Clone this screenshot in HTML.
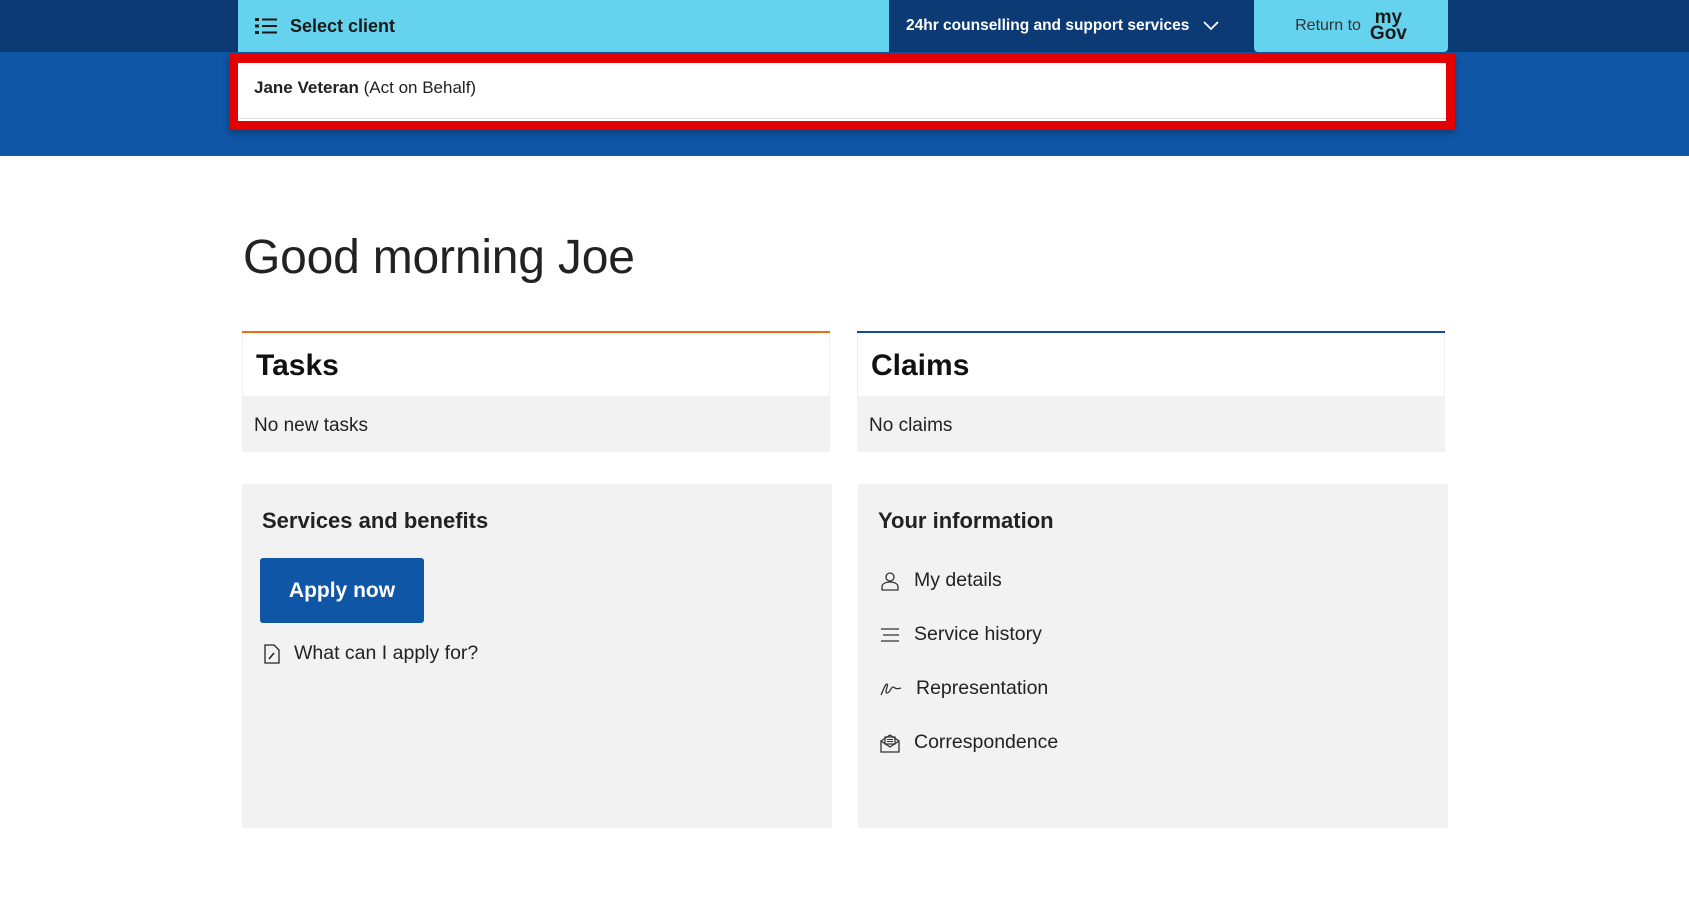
<!DOCTYPE html>
<html><head><meta charset="utf-8"><style>
*{margin:0;padding:0;box-sizing:border-box}
body{width:1689px;height:898px;background:#fff;font-family:"Liberation Sans","DejaVu Sans",sans-serif;color:#222;position:relative;overflow:hidden}
.abs{position:absolute}
.top{left:0;top:0;width:1689px;height:52px;background:#0b3a75}
.band{left:0;top:52px;width:1689px;height:104px;background:#0f56a6}
.sel{left:238px;top:0;width:651px;height:52px;background:#65d3ee;font-weight:bold;font-size:18px;color:#1a1a1a;display:flex;align-items:center;padding-left:17px}
.sup{left:889px;top:0;width:364px;height:52px;color:#fff;font-weight:bold;font-size:15.5px;display:flex;align-items:center;padding-left:17px}
.ret{left:1254px;top:0;width:194px;height:52px;background:#65d3ee;border-radius:0 0 4px 4px;display:flex;align-items:center;justify-content:center;font-size:16px;color:#333}
.red{left:229px;top:54px;width:1226px;height:76px;border:9px solid #e30000;background:#fff;box-shadow:0 3px 6px rgba(0,0,0,.3)}
.red div{height:56px;border-bottom:1px solid #ddd;padding:15px 0 0 16px;font-size:17px}
h1{position:absolute;left:243px;top:230px;font-size:48px;font-weight:normal;color:#222;letter-spacing:-0.2px}
.card{border-top:2px solid #f26a10}
.ch{height:63px;background:#fff;border-left:1px solid #eee;border-right:1px solid #eee;font-size:30px;font-weight:bold;padding:16px 0 0 13px;color:#111}
.cb{height:56px;background:#f2f2f2;font-size:19px;padding:19px 0 0 12px}
.box{background:#f2f2f2}
.box h2{font-size:22px;font-weight:bold;color:#222;position:absolute;left:20px;top:24px}
.item{position:absolute;left:20px;font-size:19.5px;display:flex;align-items:center;color:#222}
.item svg{margin-right:14px}
</style></head><body>
<div class="abs top"></div>
<div class="abs band"></div>
<div class="abs sel"><svg width="22" height="18" viewBox="0 0 22 18"><g fill="#1a1a1a"><rect x="0" y="1" width="4" height="3"/><rect x="0" y="7.5" width="4" height="3"/><rect x="0" y="14" width="4" height="3"/><rect x="7" y="1.5" width="15" height="2"/><rect x="7" y="8" width="15" height="2"/><rect x="7" y="14.5" width="15" height="2"/></g></svg><span style="margin-left:13px">Select client</span></div>
<div class="abs sup">24hr counselling and support services<svg style="margin-left:14px" width="16" height="10" viewBox="0 0 16 10"><path d="M1 1l7 7 7-7" stroke="#fff" stroke-width="1.8" fill="none"/></svg></div>
<div class="abs ret">Return to<span style="margin-left:9px;font-weight:900;font-size:19px;line-height:16px;color:#1a1a1a;text-align:center">my<br>Gov</span></div>
<div class="abs red"><div><b>Jane Veteran</b> (Act on Behalf)</div></div>
<h1>Good morning Joe</h1>
<div class="abs card" style="left:242px;top:331px;width:588px"><div class="ch">Tasks</div><div class="cb">No new tasks</div></div>
<div class="abs card" style="left:857px;top:331px;width:588px;border-top-color:#0f4d9a"><div class="ch">Claims</div><div class="cb">No claims</div></div>
<div class="abs box" style="left:242px;top:484px;width:590px;height:344px">
<h2>Services and benefits</h2>
<div class="abs" style="left:18px;top:74px;width:164px;height:65px;background:#0f56a6;border-radius:3px;color:#fff;font-weight:bold;font-size:21px;display:flex;align-items:center;justify-content:center">Apply now</div>
<div class="item" style="top:158px;left:22px"><svg width="16" height="20" viewBox="0 0 16 20"><path d="M1 1h9l5 5v13H1z" fill="none" stroke="#222" stroke-width="1.3"/><path d="M5 15l5-6" stroke="#222" stroke-width="1.5"/></svg>What can I apply for?</div>
</div>
<div class="abs box" style="left:858px;top:484px;width:590px;height:344px">
<h2>Your information</h2>
<div class="item" style="top:85px;left:22px"><svg width="20" height="20" viewBox="0 0 20 20"><circle cx="10" cy="6" r="4" fill="none" stroke="#333" stroke-width="1.3"/><path d="M2 19v-3c0-3 3-5 8-5s8 2 8 5v3z" fill="none" stroke="#333" stroke-width="1.3"/></svg>My details</div>
<div class="item" style="top:139px;left:22px"><svg width="20" height="14" viewBox="0 0 20 14"><path d="M1 1h18M3 7h16M1 13h18" stroke="#333" stroke-width="1.3"/></svg>Service history</div>
<div class="item" style="top:193px;left:22px"><svg width="22" height="14" viewBox="0 0 22 14"><path d="M1 13c2-4 4-11 6-11s-3 9 0 9 4-6 6-6 2 3 8 1" fill="none" stroke="#333" stroke-width="1.3"/></svg>Representation</div>
<div class="item" style="top:247px;left:22px"><svg width="20" height="20" viewBox="0 0 20 20"><path d="M1 8l9-6 9 6v11H1z" fill="none" stroke="#333" stroke-width="1.3"/><path d="M1 8l9 6 9-6" fill="none" stroke="#333" stroke-width="1.3"/><rect x="5" y="4" width="10" height="7" fill="none" stroke="#333" stroke-width="1.2"/><path d="M7 6.5h6M7 8.5h6" stroke="#333"/></svg>Correspondence</div>
</div>
</body></html>
